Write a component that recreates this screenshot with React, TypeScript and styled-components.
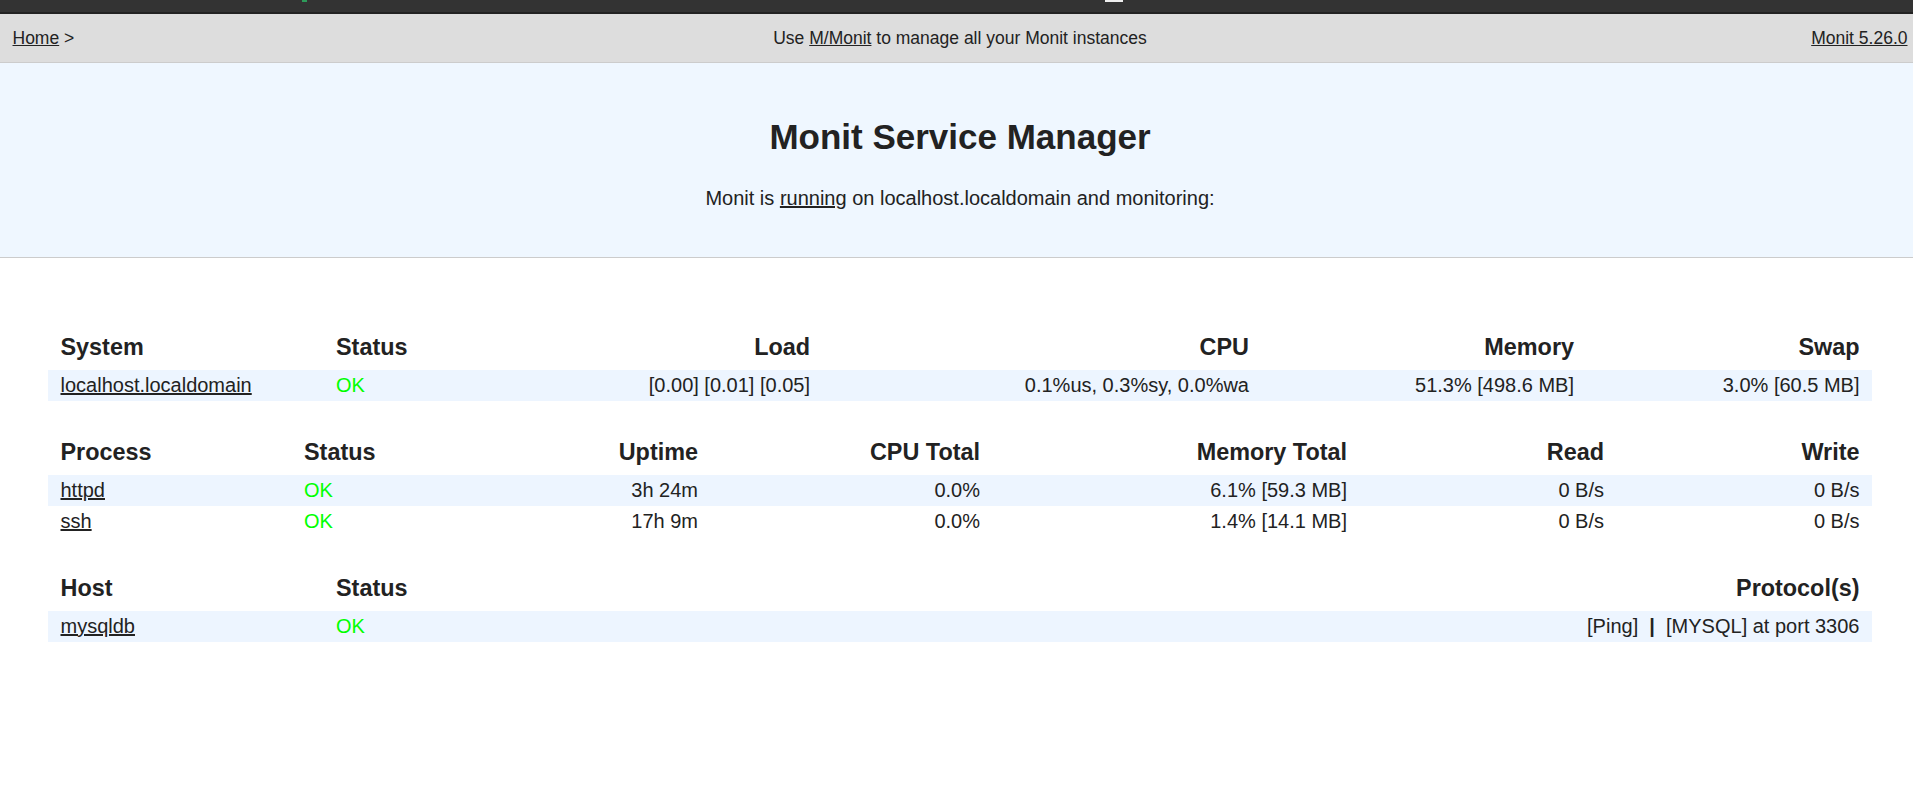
import * as React from 'react';
import styled, {createGlobalStyle} from 'styled-components';

const GlobalStyle = createGlobalStyle`
	html, body {
		margin: 0;
		overflow: hidden;
		background: #fff;
	}
	body {
		font-family: "Liberation Sans", Arial, sans-serif;
		color: #222;
	}
`;

const Page = styled.div`
	width: 1920px;
`;

const BrowserStrip = styled.div`
	position: relative;
	height: 12px;
	background: #333;
	border-bottom: 2px solid #222;
`;

const StripMark = styled.span<{$left: number; $width: number; $color: string}>`
	position: absolute;
	top: 0;
	left: ${p => p.$left}px;
	width: ${p => p.$width}px;
	height: 1.5px;
	background: ${p => p.$color};
`;

const NavBar = styled.div`
	display: grid;
	grid-template-columns: 1fr auto 1fr;
	align-items: center;
	height: 48px;
	padding: 0 12.5px;
	background: #ddd;
	border-bottom: 1px solid #ccc;
	font-size: 17.5px;
	line-height: 22px;
`;

const NavLeft = styled.div`
	justify-self: start;
`;

const NavRight = styled.div`
	justify-self: end;
`;

const Link = styled.a`
	color: #222;
	text-decoration: underline;
	cursor: pointer;
`;

const Hero = styled.div`
	padding: 54px 0 46.5px;
	background: #eff7ff;
	border-bottom: 1px solid #ccc;
	text-align: center;
`;

const Title = styled.h1`
	margin: 0;
	font-size: 35px;
	line-height: 40px;
	font-weight: bold;
`;

const Subtitle = styled.p`
	margin: 28.5px 0 0;
	font-size: 20px;
	line-height: 25px;
`;

const Content = styled.div`
	padding-top: 66.5px;
`;

const Table = styled.div<{$cols: string}>`
	display: grid;
	grid-template-columns: ${p => p.$cols};
	width: 95%;
	margin: 0 auto 28.5px;
	font-size: 20px;
`;

const HeadCell = styled.div<{$right?: boolean}>`
	padding: 10px 12.5px 10.5px;
	font-size: 23.4px;
	line-height: 25px;
	font-weight: bold;
	white-space: nowrap;
	text-align: ${p => (p.$right ? 'right' : 'left')};
`;

const Cell = styled.div<{$right?: boolean; $stripe?: boolean}>`
	height: 31px;
	padding: 0 12.5px;
	line-height: 31px;
	white-space: nowrap;
	text-align: ${p => (p.$right ? 'right' : 'left')};
	background: ${p => (p.$stripe ? '#edf5ff' : 'transparent')};
`;

const Ok = styled.span`
	color: #00ff00;
`;

type Col = {label: string; right?: boolean; width: string};

const systemCols: Col[] = [
	{label: 'System', width: '275.5px'},
	{label: 'Status', width: '200px'},
	{label: 'Load', right: true, width: '299px'},
	{label: 'CPU', right: true, width: '439px'},
	{label: 'Memory', right: true, width: '325px'},
	{label: 'Swap', right: true, width: '1fr'},
];

const processCols: Col[] = [
	{label: 'Process', width: '243.5px'},
	{label: 'Status', width: '200px'},
	{label: 'Uptime', right: true, width: '219px'},
	{label: 'CPU Total', right: true, width: '282px'},
	{label: 'Memory Total', right: true, width: '367px'},
	{label: 'Read', right: true, width: '257px'},
	{label: 'Write', right: true, width: '1fr'},
];

const hostCols: Col[] = [
	{label: 'Host', width: '275.5px'},
	{label: 'Status', width: '200px'},
	{label: 'Protocol(s)', right: true, width: '1fr'},
];

const systemRows = [
	['localhost.localdomain', 'OK', '[0.00] [0.01] [0.05]', '0.1%us, 0.3%sy, 0.0%wa', '51.3% [498.6 MB]', '3.0% [60.5 MB]'],
];

const processRows = [
	['httpd', 'OK', '3h 24m', '0.0%', '6.1% [59.3 MB]', '0 B/s', '0 B/s'],
	['ssh', 'OK', '17h 9m', '0.0%', '1.4% [14.1 MB]', '0 B/s', '0 B/s'],
];

const protocols = (
	<>
		[Ping]&nbsp;&nbsp;<b>|</b>&nbsp;&nbsp;[MYSQL] at port 3306
	</>
);

const hostRows: React.ReactNode[][] = [['mysqldb', 'OK', protocols]];

const renderCell = (value: React.ReactNode, index: number) => {
	if (index === 0) return <Link>{value}</Link>;
	if (index === 1) return <Ok>{value}</Ok>;
	return value;
};

const ServiceTable = ({cols, rows}: {cols: Col[]; rows: React.ReactNode[][]}) => (
	<Table $cols={cols.map(c => c.width).join(' ')}>
		{cols.map(c => (
			<HeadCell key={c.label} $right={c.right}>
				{c.label}
			</HeadCell>
		))}
		{rows.map((row, r) =>
			row.map((value, i) => (
				<Cell key={`${r}-${i}`} $right={cols[i].right} $stripe={r % 2 === 0}>
					{renderCell(value, i)}
				</Cell>
			))
		)}
	</Table>
);

export default function App() {
	return (
		<Page>
			<GlobalStyle />
			<BrowserStrip>
				<StripMark $left={302} $width={5} $color="#2e9b5a" />
				<StripMark $left={1105} $width={18} $color="#eeeeee" />
			</BrowserStrip>
			<NavBar>
				<NavLeft>
					<Link>Home</Link> &gt;
				</NavLeft>
				<div>
					Use <Link>M/Monit</Link> to manage all your Monit instances
				</div>
				<NavRight>
					<Link>Monit 5.26.0</Link>
				</NavRight>
			</NavBar>
			<Hero>
				<Title>Monit Service Manager</Title>
				<Subtitle>
					Monit is <Link>running</Link> on localhost.localdomain and monitoring:
				</Subtitle>
			</Hero>
			<Content>
				<ServiceTable cols={systemCols} rows={systemRows} />
				<ServiceTable cols={processCols} rows={processRows} />
				<ServiceTable cols={hostCols} rows={hostRows} />
			</Content>
		</Page>
	);
}
